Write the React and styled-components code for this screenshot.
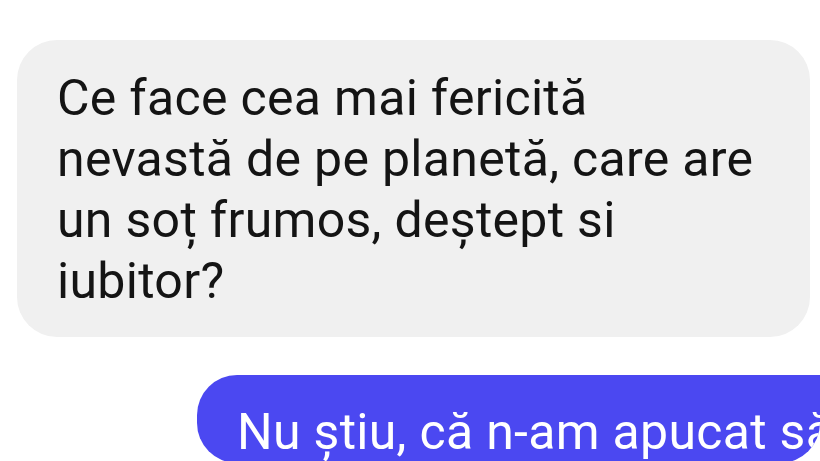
import React from 'react';
import styled, { createGlobalStyle } from 'styled-components';

const GlobalStyle = createGlobalStyle`
    html, body {
        margin: 0;
        padding: 0;
        background: #ffffff;
    }
    body {
        width: 820px;
        height: 461px;
        overflow: hidden;
        font-family: Roboto, "Noto Sans", Arial, sans-serif;
    }
`;

const Thread = styled.div`
    display: flex;
    flex-direction: column;
    gap: 38px;
    padding-top: 40px;
`;

const Row = styled.div`
    display: flex;
    padding-left: ${({ $mine }) => ($mine ? '197px' : '17px')};
    padding-right: ${({ $mine }) => ($mine ? '0' : '10px')};
    overflow: hidden;
`;

const Bubble = styled.div`
    box-sizing: border-box;
    flex: 1;
    min-width: 0;
    border-radius: 40px;
    font-size: 50px;
    line-height: 61px;
    letter-spacing: 0.3px;
    padding: ${({ $mine }) => ($mine ? '27px 0 0 40px' : '28px 40px 25px 40px')};
    border-top-right-radius: ${({ $mine }) => ($mine ? '0' : '40px')};
    background: ${({ $mine }) => ($mine ? '#4b48f1' : '#f0f0f0')};
    color: ${({ $mine }) => ($mine ? '#ffffff' : '#141414')};
    white-space: nowrap;
    overflow: hidden;
`;

const App = () => {
    return (
        <>
            <GlobalStyle />
            <Thread>
                <Row>
                    <Bubble>
                        Ce face cea mai fericită<br />
                        nevastă de pe planetă, care are<br />
                        un soț frumos, deștept si<br />
                        iubitor?
                    </Bubble>
                </Row>
                <Row $mine>
                    <Bubble $mine>Nu știu, că n-am apucat să</Bubble>
                </Row>
            </Thread>
        </>
    );
};

export default App;
